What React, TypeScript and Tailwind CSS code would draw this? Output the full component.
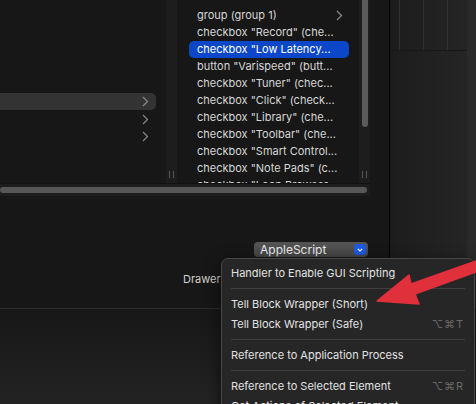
import React from "react";

const items = [
  'group (group 1)',
  'checkbox "Record" (che...',
  'checkbox "Low Latency...',
  'button "Varispeed" (butt...',
  'checkbox "Tuner" (chec...',
  'checkbox "Click" (check...',
  'checkbox "Library" (che...',
  'checkbox "Toolbar" (che...',
  'checkbox "Smart Control...',
  'checkbox "Note Pads" (c...',
  'checkbox "Loop Browser...',
];

function Chevron() {
  return (
    <svg width="7" height="11" viewBox="0 0 7 11" className="shrink-0">
      <path d="M1 1l4.5 4.5L1 10" fill="none" stroke="#8a8a8a" strokeWidth="1.2" />
    </svg>
  );
}

function Grip() {
  return (
    <div className="flex gap-[3px]">
      <div className="w-px h-[7px] bg-[#555]" />
      <div className="w-px h-[7px] bg-[#555]" />
    </div>
  );
}

function MenuItem({ label, shortcut }: { label: string; shortcut?: string }) {
  return (
    <div className="h-[20px] flex items-center justify-between pl-[9px] pr-[10px] text-[#e2e2e2]">
      <span>{label}</span>
      {shortcut && <span className="text-[#6a6a6a] text-[11px] tracking-[1px]">{shortcut}</span>}
    </div>
  );
}

function Sep() {
  return (
    <div className="h-[11px] flex items-center px-[9px]">
      <div className="h-px w-full bg-[#3e3e3e]" />
    </div>
  );
}

export default function App() {
  return (
    <div
      className="relative w-[476px] h-[404px] overflow-hidden bg-[#1b1b1b] text-[11px]"
      style={{ fontFamily: "Inter, 'Noto Sans', sans-serif" }}
    >
      <div className="flex h-[309px]">
        {/* main panel */}
        <div className="w-[389px] flex flex-col bg-[#171717] border-b border-[#2c2c2c]">
          <div className="flex h-[183px]">
            {/* column 1 */}
            <div className="w-[166px] pt-[93px] pr-[10px]">
              <div className="h-[17px] bg-[#333333] rounded-r-[5px] flex items-center justify-end pr-[7px]">
                <Chevron />
              </div>
              <div className="h-[18px] flex items-center justify-end pr-[7px]">
                <Chevron />
              </div>
              <div className="h-[17px] flex items-center justify-end pr-[7px]">
                <Chevron />
              </div>
            </div>
            {/* divider */}
            <div className="w-[11px] bg-[#1d1d1d] flex flex-col justify-end items-center pb-[5px]">
              <Grip />
            </div>
            {/* column 2 */}
            <div className="w-[182px] pt-[7px] pl-[12px] pr-[10px] overflow-hidden">
              {items.map((t, i) => (
                <div
                  key={i}
                  className={
                    "h-[17px] flex items-center justify-between rounded-[5px] pl-[8px] pr-[6px] whitespace-nowrap " +
                    (i === 2 ? "bg-[#0b47c8] text-white" : "text-[#d6d6d6]")
                  }
                >
                  <span>{t}</span>
                  {i === 0 && <Chevron />}
                </div>
              ))}
            </div>
            {/* vertical scroller */}
            <div className="w-[11px] bg-[#1d1d1d] flex flex-col items-center justify-between pb-[5px]">
              <div className="w-[6px] h-[127px] bg-[#5a5a5a] rounded-b-full" />
              <Grip />
            </div>
          </div>
          {/* horizontal scroller */}
          <div className="w-[370px] h-[13px] bg-[#1d1d1d] border-t border-[#111] pt-[3px]">
            <div className="w-[367px] h-[6px] bg-[#575757] rounded-full" />
          </div>
          {/* bottom area */}
          <div className="flex-1 flex flex-col pt-[46px]">
            <div className="flex justify-end pr-[21px]">
              <div className="w-[114px] h-[15px] rounded-[4px] bg-gradient-to-b from-[#555] to-[#474747] flex items-center justify-between pl-[6px] pr-[2px] text-[#ececec] text-[12px]">
                <span className="leading-none">AppleScript</span>
                <div className="w-[12px] h-[11px] rounded-[3px] bg-[#1f5ae0] flex items-center justify-center">
                  <svg width="6" height="4" viewBox="0 0 6 4">
                    <path d="M0.8 0.8L3 3L5.2 0.8" fill="none" stroke="white" strokeWidth="1.1" />
                  </svg>
                </div>
              </div>
            </div>
            <div className="pl-[183px] mt-[14px] text-[#cfcfcf]">Drawer:</div>
          </div>
        </div>
        <div className="w-px bg-black" />
        {/* right panel */}
        <div className="flex-1 flex bg-gradient-to-r from-[#1c1c1c] to-[#262626]">
          <div className="flex-1">
            <div className="h-[51px] flex border-b border-[#181818]">
              <div className="w-[10px] border-r border-[#313131]" />
              <div className="w-[24px] border-r border-[#313131]" />
              <div className="w-[24px] border-r border-[#313131]" />
            </div>
          </div>
          <div className="w-[9px] bg-[#2a2a2a]" />
        </div>
      </div>
      <div className="h-[95px] bg-gradient-to-b from-[#171717] to-[#232323]" />

      {/* popup menu */}
      <div className="absolute left-[221px] top-[258px] w-[254px] h-[160px] rounded-[7px] border border-[#474747] bg-[#262626] pt-[4px] shadow-[0_4px_16px_rgba(0,0,0,0.6)]">
        <MenuItem label="Handler to Enable GUI Scripting" />
        <Sep />
        <MenuItem label="Tell Block Wrapper (Short)" />
        <MenuItem label="Tell Block Wrapper (Safe)" shortcut="⌥⌘T" />
        <Sep />
        <MenuItem label="Reference to Application Process" />
        <Sep />
        <MenuItem label="Reference to Selected Element" shortcut="⌥⌘R" />
        <MenuItem label="Get Actions of Selected Element" />
      </div>

      {/* red arrow */}
      <svg className="absolute left-0 top-0 pointer-events-none" width="476" height="404" viewBox="0 0 476 404">
        <polygon
          points="377,301 409,275 411,284 476,261 476,272 415,294 419,304"
          fill="#e0303b"
          stroke="#e0303b"
          strokeWidth="1.5"
          strokeLinejoin="round"
        />
      </svg>
    </div>
  );
}
